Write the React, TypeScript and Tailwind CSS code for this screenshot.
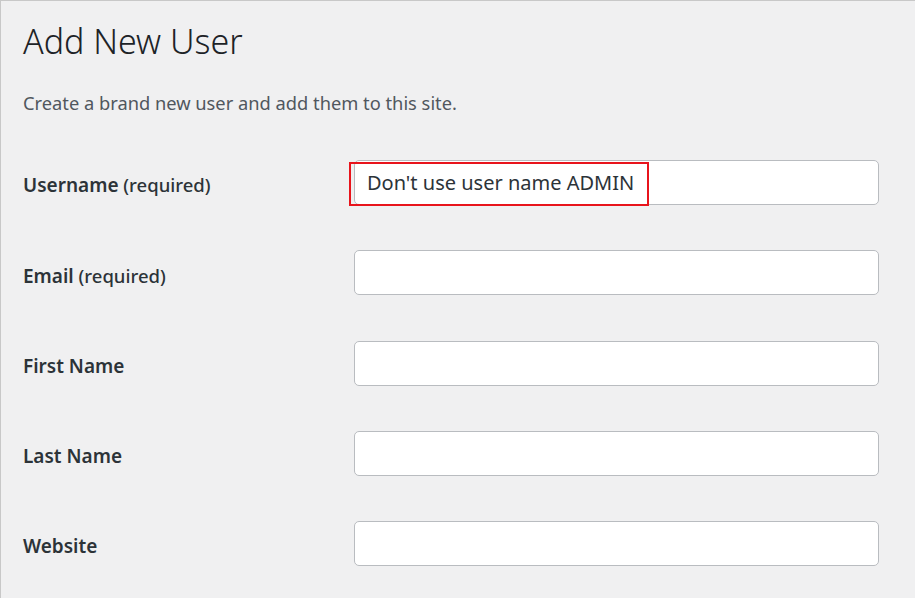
export default function App() {
  const fields = [
    { label: "Username", required: true, value: "Don't use user name ADMIN" },
    { label: "Email", required: true, value: "" },
    { label: "First Name", required: false, value: "" },
    { label: "Last Name", required: false, value: "" },
    { label: "Website", required: false, value: "" },
  ];

  return (
    <div
      className="w-[915px] h-[598px] overflow-hidden bg-[#f0f0f1] border-t border-l border-[#c8c8c8] text-[#1d2327]"
      style={{ fontFamily: '"Noto Sans", "Open Sans", sans-serif' }}
    >
      <div className="pl-[22px] pt-[16px]">
        <h1 className="text-[34px] leading-[48px] font-light text-[#1d2327]">Add New User</h1>
        <p className="mt-[26px] text-[18.3px] leading-[24px] text-[#50575e]">
          Create a brand new user and add them to this site.
        </p>

        <div className="mt-[45px] flex flex-col gap-[45.3px]">
          {fields.map((f) => (
            <div key={f.label} className="flex items-center">
              <label className="w-[331px] pt-[6px] text-[19px] font-semibold text-[#2c3338]">
                {f.label}
                {f.required && <span className="text-[18.5px] font-medium"> (required)</span>}
              </label>
              <div className="relative">
                <div className="w-[525px] h-[45px] rounded-[5px] border border-[#b9bcc0] bg-white flex items-center px-[12px] text-[20px] text-[#2c3338]">
                  {f.value}
                </div>
                {f.value && (
                  <div className="absolute left-[-5px] top-[2px] w-[300px] h-[44px] border-2 border-[#e8141c]" />
                )}
              </div>
            </div>
          ))}
        </div>
      </div>
    </div>
  );
}
